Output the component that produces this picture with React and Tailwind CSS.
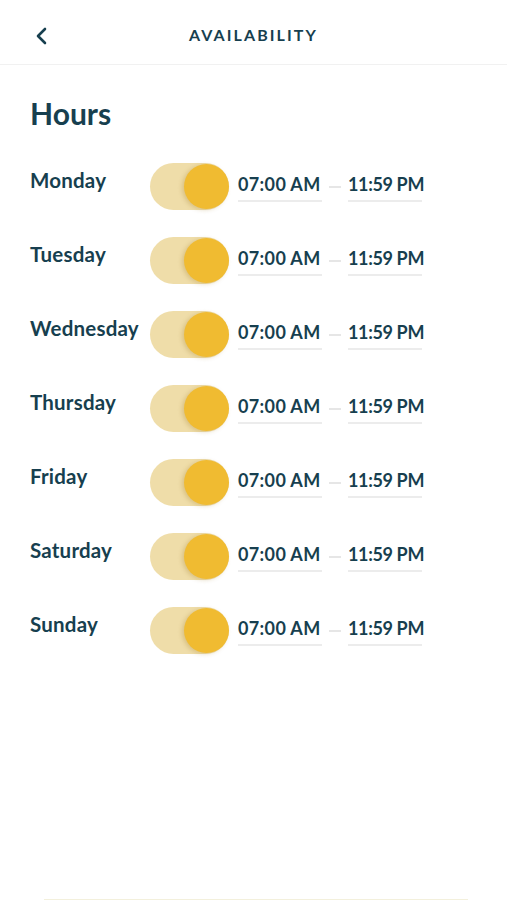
import React from "react";

const days = ["Monday", "Tuesday", "Wednesday", "Thursday", "Friday", "Saturday", "Sunday"];

export default function App() {
  return (
    <div className="w-[507px] h-[900px] bg-white relative overflow-hidden text-[#173f4f]" style={{ fontFamily: "Lato, 'Noto Sans', sans-serif" }}>
      <div className="h-[65px] border-b border-[#f1f1f1] flex items-center relative">
        <svg className="absolute left-[34px] top-[27px]" width="16" height="18" viewBox="0 0 16 18" fill="none">
          <path d="M11 2 L4 9 L11 16" stroke="#173f4f" strokeWidth="2.6" strokeLinecap="round" strokeLinejoin="round" />
        </svg>
        <div className="w-full text-center text-[16px] font-bold tracking-[0.13em] pt-[6px]">AVAILABILITY</div>
      </div>
      <div className="px-[30px] pt-[28px]">
        <div className="text-[30px] font-bold leading-[40px]">Hours</div>
        <div className="mt-[30px] flex flex-col gap-[27px]">
          {days.map((d) => (
            <div key={d} className="flex items-start h-[47px]">
              <div className="w-[120px] text-[20.5px] font-bold leading-[24px] pt-[5px] tracking-[0.01em] whitespace-nowrap">{d}</div>
              <div className="w-[79px] h-[47px] rounded-full bg-[#efdda9] relative shrink-0">
                <div className="absolute right-0 top-[1px] w-[45px] h-[45px] rounded-full bg-[#f0bb31] shadow-[-2px_1px_4px_rgba(150,110,20,0.25)]" />
              </div>
              <div className="flex items-start ml-[9px] pt-[10px]">
                <div className="w-[84px] border-b-2 border-[#ececec] text-[18px] font-bold leading-[22px] pb-[5px] whitespace-nowrap tracking-[0.02em]">07:00 AM</div>
                <div className="w-[12px] h-[2px] bg-[#e6e6e6] mx-[7px] mt-[13px]" />
                <div className="w-[74px] border-b-2 border-[#ececec] text-[18px] font-bold leading-[22px] pb-[5px] whitespace-nowrap tracking-[-0.02em]">11:59 PM</div>
              </div>
            </div>
          ))}
        </div>
      </div>
      <div className="absolute bottom-0 left-[44px] w-[424px] h-[1px] bg-[#f3f0dc]" />
    </div>
  );
}
